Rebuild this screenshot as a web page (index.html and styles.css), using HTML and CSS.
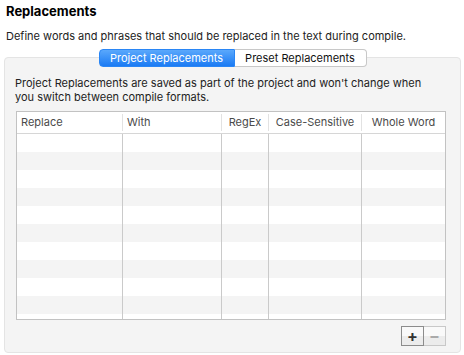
FILE: index.html
```html
<html lang="en">
<head>
    <link rel="stylesheet" href="styles.css">
</head>
<body>
    <div class='page'>
        <h1 class='title'>Replacements</h1>
        <p class='desc'>Define words and phrases that should be replaced in the text during compile.</p>
        <div class='box'>
            <div class='tabs'>
                <span class='tab tab-on'>Project Replacements</span>
                <span class='tab'>Preset Replacements</span>
            </div>
            <p class='note'>Project Replacements are saved as part of the project and won't change when you switch between compile formats.</p>
            <div class='table'>
                <div class='row head'>
                    <span class='cell left'>Replace</span>
                    <span class='cell left'>With</span>
                    <span class='cell'>RegEx</span>
                    <span class='cell'>Case-Sensitive</span>
                    <span class='cell'>Whole Word</span>
                </div>
                <div class='rows' id='rows'></div>
            </div>
            <div class='buttons'>
                <span class='btn btn-add'>+</span>
                <span class='btn btn-remove'>&minus;</span>
            </div>
        </div>
    </div>
    <script>
        const rows = document.getElementById('rows');
        for (let i = 0; i < 11; i++) {
            const row = document.createElement('div');
            row.className = i % 2 ? 'row stripe' : 'row';
            for (let c = 0; c < 5; c++) {
                const cell = document.createElement('span');
                cell.className = 'cell';
                row.appendChild(cell);
            }
            rows.appendChild(row);
        }
    </script>
</body>
</html>
```

FILE: styles.css
```css
body {
    margin: 0;
    background-color: #fff;
    font-family: Inter, "Liberation Sans", sans-serif;
    color: #222;
}
.page {
    padding: 3px 4px 0 4px;
    width: 457px;
}
.title {
    font-size: 13px;
    font-weight: bold;
    margin: 0 0 0 2px;
    line-height: 16px;
    color: #000;
}
.desc {
    font-size: 11px;
    margin: 10px 0 0 2px;
    line-height: 14px;
}
.box {
    margin-top: 14px;
    background-color: #f4f4f4;
    border: 1px solid #e4e4e4;
    border-radius: 4px;
    padding: 0 14px 6px 10px;
    height: 288px;
}
.tabs {
    display: flex;
    justify-content: center;
    margin-top: -9px;
    margin-left: 4px;
}
.tab {
    height: 18px;
    line-height: 16px;
    box-sizing: border-box;
    font-size: 11px;
    white-space: nowrap;
    background-color: #fff;
    border: 1px solid #c8c8c8;
    border-left: none;
    border-radius: 0 4px 4px 0;
    color: #111;
    width: 132px;
    text-align: center;
}
.tab-on {
    width: 136px;
    border: 1px solid #2a86f5;
    border-radius: 4px 0 0 4px;
    color: #fff;
    background: linear-gradient(#5aa8fc, #1b7bf4);
}
.note {
    font-size: 11px;
    line-height: 14px;
    margin: 9px 0 0 0;
    max-width: 414px;
    color: #222;
}
.table {
    margin-top: 7px;
    margin-left: 1px;
    border: 1px solid #c2c2c2;
    background-color: #fff;
}
.row {
    display: grid;
    grid-template-columns: 106px 99px 47px 93px 1fr;
    height: 18px;
}
.row .cell {
    border-right: 1px solid #cacaca;
}
.row .cell:last-child {
    border-right: none;
}
.stripe {
    background-color: #f4f4f4;
}
.head {
    height: 21px;
    border-bottom: 1px solid #d6d6d6;
    font-size: 11px;
    color: #4a4a4a;
    align-items: center;
}
.head .cell {
    text-align: center;
    border-right: 1px solid #e2e2e2;
    line-height: 17px;
    white-space: nowrap;
}
.head .left {
    text-align: left;
    padding-left: 4px;
}
.rows {
    height: 185px;
    overflow: hidden;
}
.buttons {
    display: flex;
    justify-content: flex-end;
    margin-top: 6px;
}
.btn {
    width: 22px;
    height: 20px;
    box-sizing: border-box;
    text-align: center;
    font-size: 16px;
    line-height: 18px;
    font-weight: bold;
    background: linear-gradient(#f9f9f9 50%, #ececec 50%);
}
.btn-add {
    width: 23px;
    border: 1px solid #8c8c8c;
    color: #333;
}
.btn-remove {
    border: 1px solid #c8c8c8;
    border-left: none;
    color: #aaa;
}
```
